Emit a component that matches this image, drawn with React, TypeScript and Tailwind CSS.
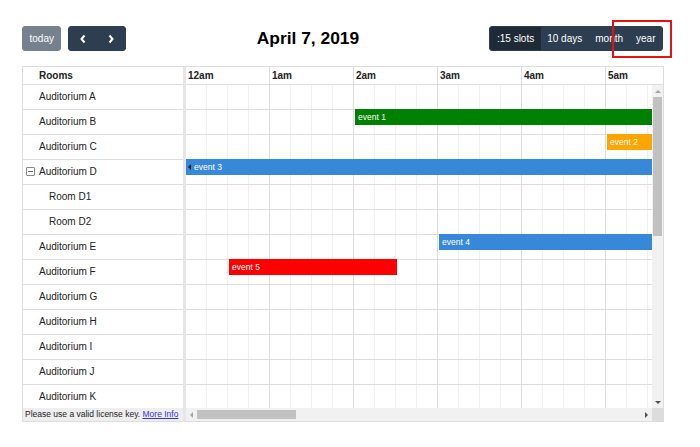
import React from 'react';

const HOUR = 84;

const resources = [
  { name: 'Auditorium A' },
  { name: 'Auditorium B' },
  { name: 'Auditorium C' },
  { name: 'Auditorium D', expander: true },
  { name: 'Room D1', child: true },
  { name: 'Room D2', child: true },
  { name: 'Auditorium E' },
  { name: 'Auditorium F' },
  { name: 'Auditorium G' },
  { name: 'Auditorium H' },
  { name: 'Auditorium I' },
  { name: 'Auditorium J' },
  { name: 'Auditorium K' },
];

const events = [
  { row: 1, title: 'event 1', start: 2, end: 9, cls: 'bg-[#008000] border-[#008000]' },
  { row: 2, title: 'event 2', start: 5, end: 9, cls: 'bg-[#ffa500] border-[#ffa500]' },
  { row: 3, title: 'event 3', start: 0, end: 9, cls: 'bg-[#3788d8] border-[#3788d8]', cont: true },
  { row: 6, title: 'event 4', start: 3, end: 9, cls: 'bg-[#3788d8] border-[#3788d8]' },
  { row: 7, title: 'event 5', start: 0.5, end: 2.5, cls: 'bg-[#ff0000] border-[#ff0000]' },
];

const hours = ['12am', '1am', '2am', '3am', '4am', '5am'];
const views = ['10 days', 'month', 'year'];

function Chevron({ dir }: { dir: 'left' | 'right' }) {
  return (
    <svg width="8" height="10" viewBox="0 0 8 10" fill="none">
      <polyline
        points={dir === 'left' ? '5.5,1.5 2.5,5 5.5,8.5' : '2.5,1.5 5.5,5 2.5,8.5'}
        stroke="white"
        strokeWidth="2"
      />
    </svg>
  );
}

export default function App() {
  return (
    <div className="relative w-[700px] h-[447px] bg-white font-['Liberation_Sans',Arial,sans-serif] text-[#222] overflow-hidden">
      {/* Toolbar */}
      <div className="ml-[22px] w-[642px] pt-[26px] flex items-center justify-between">
        <div className="flex gap-[7px]">
          <button className="h-[25px] px-[6.5px] text-[10px] text-white bg-[#2c3e50] opacity-65 border border-[#2c3e50] rounded-[3px]">
            today
          </button>
          <div className="flex h-[25px] w-[58px] bg-[#2c3e50] border border-[#2c3e50] rounded-[3px]">
            <button className="flex-1 flex items-center justify-center">
              <Chevron dir="left" />
            </button>
            <button className="flex-1 flex items-center justify-center">
              <Chevron dir="right" />
            </button>
          </div>
        </div>
        <h2 className="text-[17.4px] font-bold text-black leading-none">April 7, 2019</h2>
        <div className="flex h-[25px] mr-px rounded-[3px] overflow-hidden border border-[#2c3e50] bg-[#2c3e50] text-[10px] text-white">
          <button className="px-[6.5px] bg-[#1e2b37]">:15 slots</button>
          {views.map((v) => (
            <button key={v} className="px-[6.5px]">
              {v}
            </button>
          ))}
        </div>
      </div>

      {/* Timeline table */}
      <div className="mt-[15px] ml-[22px] w-[642px] h-[356px] border border-[#ddd] flex text-[10px]">
        {/* Resource column */}
        <div className="w-[160px] flex flex-col">
          <div className="h-[18px] shrink-0 border-b border-[#ddd] pl-[16px] flex items-center font-bold">
            Rooms
          </div>
          <div className="flex-1 overflow-hidden">
            {resources.map((r) => (
              <div key={r.name} className="h-[25px] border-b border-[#ddd] pb-[2px] flex items-center">
                {r.expander ? (
                  <span className="ml-[3px] mr-[4px] w-[9px] h-[9px] border border-[#888] rounded-[1px] flex items-center justify-center">
                    <span className="w-[5px] h-px bg-[#666]" />
                  </span>
                ) : (
                  <span className={r.child ? 'w-[26px]' : 'w-[16px]'} />
                )}
                {r.name}
              </div>
            ))}
          </div>
          <div className="h-[13px] shrink-0 bg-[#eee] pl-[2px] flex items-center text-[8.5px] text-[#222] whitespace-nowrap">
            Please use a valid license key.&nbsp;<a className="text-[#3333dd] underline">More Info</a>
          </div>
        </div>

        {/* Divider */}
        <div className="w-[3px] shrink-0 bg-[#e6e6e6]" />

        {/* Time area */}
        <div className="flex-1 flex flex-col min-w-0">
          <div className="h-[18px] shrink-0 border-b border-[#ddd] flex overflow-hidden">
            {hours.map((h) => (
              <div key={h} className="w-[84px] shrink-0 border-r border-[#ddd] pl-[2px] flex items-center font-bold">
                {h}
              </div>
            ))}
          </div>

          <div className="flex-1 flex min-h-0">
            <div className="relative flex-1 overflow-hidden">
              {/* slot lines */}
              <div className="absolute inset-0 flex">
                {Array.from({ length: 24 }, (_, i) => (
                  <div
                    key={i}
                    className={`w-[21px] shrink-0 border-r ${i % 4 === 3 ? 'border-[#ddd]' : 'border-[#f0f0f0]'}`}
                  />
                ))}
              </div>
              {/* rows */}
              <div className="relative">
                {resources.map((r, ri) => (
                  <div key={r.name} className="relative h-[25px] border-b border-[#ddd]">
                    {events
                      .filter((e) => e.row === ri)
                      .map((e) => (
                        <div
                          key={e.title}
                          className={`absolute top-[-1px] h-[16px] border ${e.cls} text-white text-[8.5px] flex items-center whitespace-nowrap overflow-hidden`}
                          style={{ left: e.start * HOUR + (e.start > 0 ? 1 : 0), width: (e.end - e.start) * HOUR }}
                        >
                          {e.cont && (
                            <span className="ml-[1px] w-0 h-0 border-y-[3px] border-y-transparent border-r-[3px] border-r-[#222]" />
                          )}
                          <span className={e.cont ? 'ml-[3px]' : 'ml-[2px]'}>{e.title}</span>
                        </div>
                      ))}
                  </div>
                ))}
              </div>
            </div>
            {/* vertical scrollbar */}
            <div className="w-[11px] shrink-0 bg-[#f1f1f1] flex flex-col items-center">
              <div className="h-[12px] flex items-center justify-center">
                <span className="w-0 h-0 border-x-[3px] border-x-transparent border-b-[3px] border-b-[#a3a3a3]" />
              </div>
              <div className="w-[9px] h-[139px] bg-[#c1c1c1]" />
              <div className="flex-1" />
              <div className="h-[12px] flex items-center justify-center">
                <span className="w-0 h-0 border-x-[3px] border-x-transparent border-t-[3px] border-t-[#505050]" />
              </div>
            </div>
          </div>

          {/* horizontal scrollbar */}
          <div className="h-[13px] shrink-0 flex bg-[#f1f1f1]">
            <div className="w-[11px] flex items-center justify-center">
              <span className="w-0 h-0 border-y-[3px] border-y-transparent border-r-[3px] border-r-[#a3a3a3]" />
            </div>
            <div className="w-[99px] h-[9px] mt-[2px] bg-[#c1c1c1]" />
            <div className="flex-1" />
            <div className="w-[11px] flex items-center justify-center">
              <span className="w-0 h-0 border-y-[3px] border-y-transparent border-l-[3px] border-l-[#505050]" />
            </div>
            <div className="w-[11px] bg-[#dcdcdc]" />
          </div>
        </div>
      </div>

      {/* highlight box */}
      <div className="absolute left-[612px] top-[20px] w-[60px] h-[38px] border-2 border-[#e81010]" />
    </div>
  );
}
